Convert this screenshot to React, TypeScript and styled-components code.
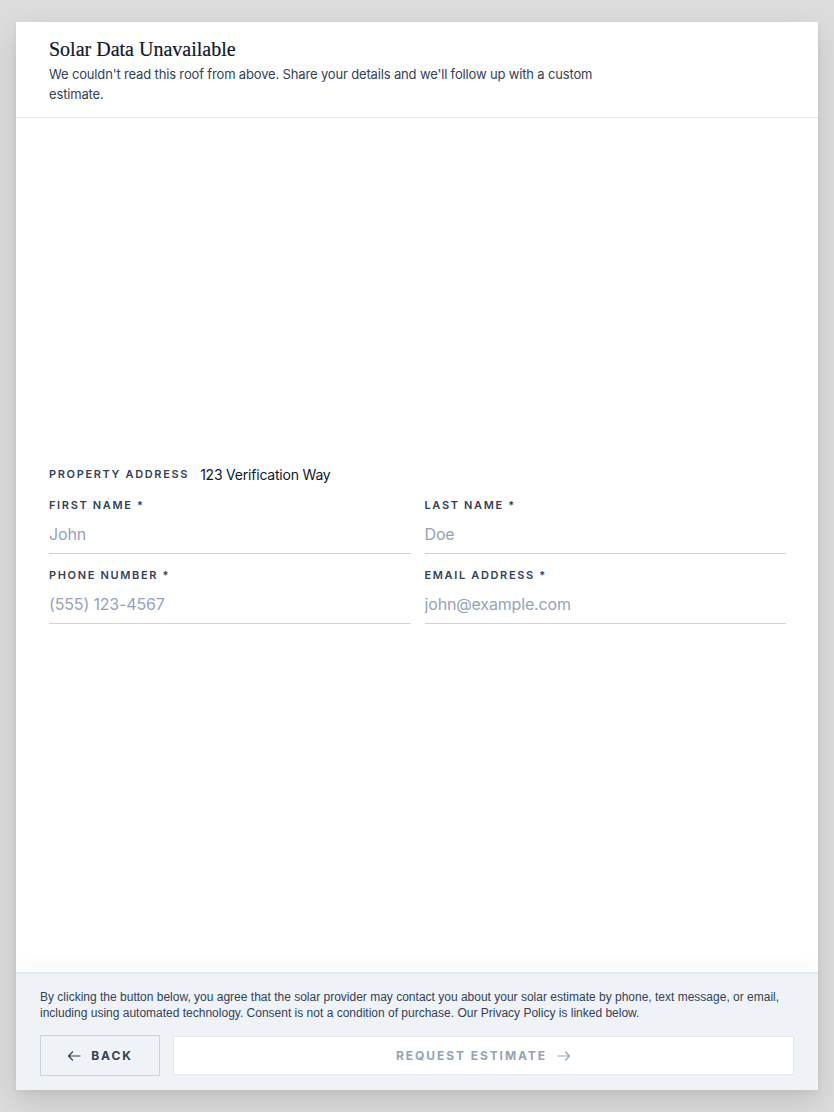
import React from "react";
import styled, { createGlobalStyle } from "styled-components";

const Global = createGlobalStyle`
  html, body { margin: 0; padding: 0; background: #dcdcdc; }
  body { font-family: Inter, "Noto Sans", sans-serif; }
  * { box-sizing: border-box; }
`;

const Page = styled.div`
  padding: 22px 16px;
  min-height: 1112px;
`;

const Card = styled.div`
  background: #ffffff;
  height: 1068px;
  display: flex;
  flex-direction: column;
  box-shadow: 0 12px 28px rgba(0, 0, 0, 0.12), 0 2px 6px rgba(0, 0, 0, 0.05);
`;

const Header = styled.header`
  padding: 14px 33px 13px;
  border-bottom: 1px solid #e2e8f0;
`;

const Title = styled.h1`
  margin: 0 0 3px;
  font-family: "Liberation Serif", "DejaVu Serif", serif;
  font-weight: 400;
  font-size: 20px;
  line-height: 26px;
  color: #0f172a;
  -webkit-text-stroke: 0.2px #0f172a;
`;

const Subtitle = styled.p`
  margin: 0;
  max-width: 580px;
  font-size: 13px;
  line-height: 19.5px;
  letter-spacing: -0.012em;
  color: #334155;
`;

const Body = styled.main`
  flex: 1;
  display: flex;
  flex-direction: column;
  justify-content: center;
  padding: 0 32px 2px 33px;
`;

const Stack = styled.div`
  display: flex;
  flex-direction: column;
  gap: 14px;
`;

const AddressRow = styled.div`
  display: flex;
  align-items: center;
  gap: 11px;
  height: 20px;
`;

const Label = styled.span`
  font-size: 11px;
  line-height: 14px;
  font-weight: 600;
  letter-spacing: 0.15em;
  text-transform: uppercase;
  color: #334155;
`;

const AddressValue = styled.span`
  font-size: 14px;
  letter-spacing: -0.015em;
  color: #0f172a;
`;

const Grid = styled.div`
  display: grid;
  grid-template-columns: 1fr 1fr;
  gap: 14px;
`;

const Field = styled.label`
  display: flex;
  flex-direction: column;
  gap: 2px;
`;

const Input = styled.input`
  height: 40px;
  border: none;
  border-bottom: 1px solid #cbd5e1;
  padding: 0;
  font-family: Inter, "Noto Sans", sans-serif;
  font-size: 16px;
  letter-spacing: -0.01em;
  color: #0f172a;
  background: transparent;
  outline: none;
  &::placeholder { color: #94a3b8; }
`;

const Footer = styled.footer`
  background: #eff3f8;
  border-top: 2px solid #e2e8f0;
  padding: 15px 24px 14px;
  display: flex;
  flex-direction: column;
  gap: 14px;
  box-shadow: 0 -10px 18px rgba(0, 0, 0, 0.025);
`;

const Consent = styled.p`
  margin: 0;
  font-family: "Liberation Sans", Arial, sans-serif;
  font-size: 12px;
  line-height: 16px;
  color: #334155;
`;

const Actions = styled.div`
  display: flex;
  gap: 13px;
  align-items: center;
`;

const Button = styled.button<{ $primary?: boolean }>`
  height: ${(p) => (p.$primary ? "39px" : "41px")};
  width: ${(p) => (p.$primary ? "auto" : "120px")};
  flex: ${(p) => (p.$primary ? "1" : "none")};
  display: flex;
  align-items: center;
  justify-content: center;
  gap: 10px;
  background: ${(p) => (p.$primary ? "#ffffff" : "transparent")};
  border: 1px solid ${(p) => (p.$primary ? "#e2e8f0" : "#cbd5e1")};
  color: ${(p) => (p.$primary ? "#94a3b8" : "#334155")};
  font-family: Inter, "Noto Sans", sans-serif;
  font-size: 12px;
  font-weight: 700;
  letter-spacing: 0.16em;
  text-transform: uppercase;
  padding: 0;
  cursor: pointer;
`;

const ArrowIcon = styled.svg`
  width: 14px;
  height: 10px;
  flex: none;
`;

function Arrow({ dir }: { dir: "left" | "right" }) {
  const d = dir === "left" ? "M13 5H1.5M5.5 1L1.5 5l4 4" : "M1 5h11.5M8.5 1l4 4-4 4";
  return (
    <ArrowIcon viewBox="0 0 14 10" fill="none" stroke="currentColor" strokeWidth={1.2} strokeLinecap="round" strokeLinejoin="round">
      <path d={d} />
    </ArrowIcon>
  );
}

const fields = [
  { label: "First Name *", placeholder: "John", type: "text" },
  { label: "Last Name *", placeholder: "Doe", type: "text" },
  { label: "Phone Number *", placeholder: "(555) 123-4567", type: "tel" },
  { label: "Email Address *", placeholder: "john@example.com", type: "email" },
];

export default function App() {
  return (
    <>
      <Global />
      <Page>
        <Card>
          <Header>
            <Title>Solar Data Unavailable</Title>
            <Subtitle>
              We couldn't read this roof from above. Share your details and we'll follow up with a custom estimate.
            </Subtitle>
          </Header>
          <Body>
            <Stack>
              <AddressRow>
                <Label>Property Address</Label>
                <AddressValue>123 Verification Way</AddressValue>
              </AddressRow>
              <Grid>
                {fields.map((f) => (
                  <Field key={f.label}>
                    <Label>{f.label}</Label>
                    <Input type={f.type} placeholder={f.placeholder} />
                  </Field>
                ))}
              </Grid>
            </Stack>
          </Body>
          <Footer>
            <Consent>
              By clicking the button below, you agree that the solar provider may contact you about your solar estimate by phone, text message, or email, including using automated technology. Consent is not a condition of purchase. Our Privacy Policy is linked below.
            </Consent>
            <Actions>
              <Button>
                <Arrow dir="left" />
                Back
              </Button>
              <Button $primary disabled>
                Request Estimate
                <Arrow dir="right" />
              </Button>
            </Actions>
          </Footer>
        </Card>
      </Page>
    </>
  );
}
